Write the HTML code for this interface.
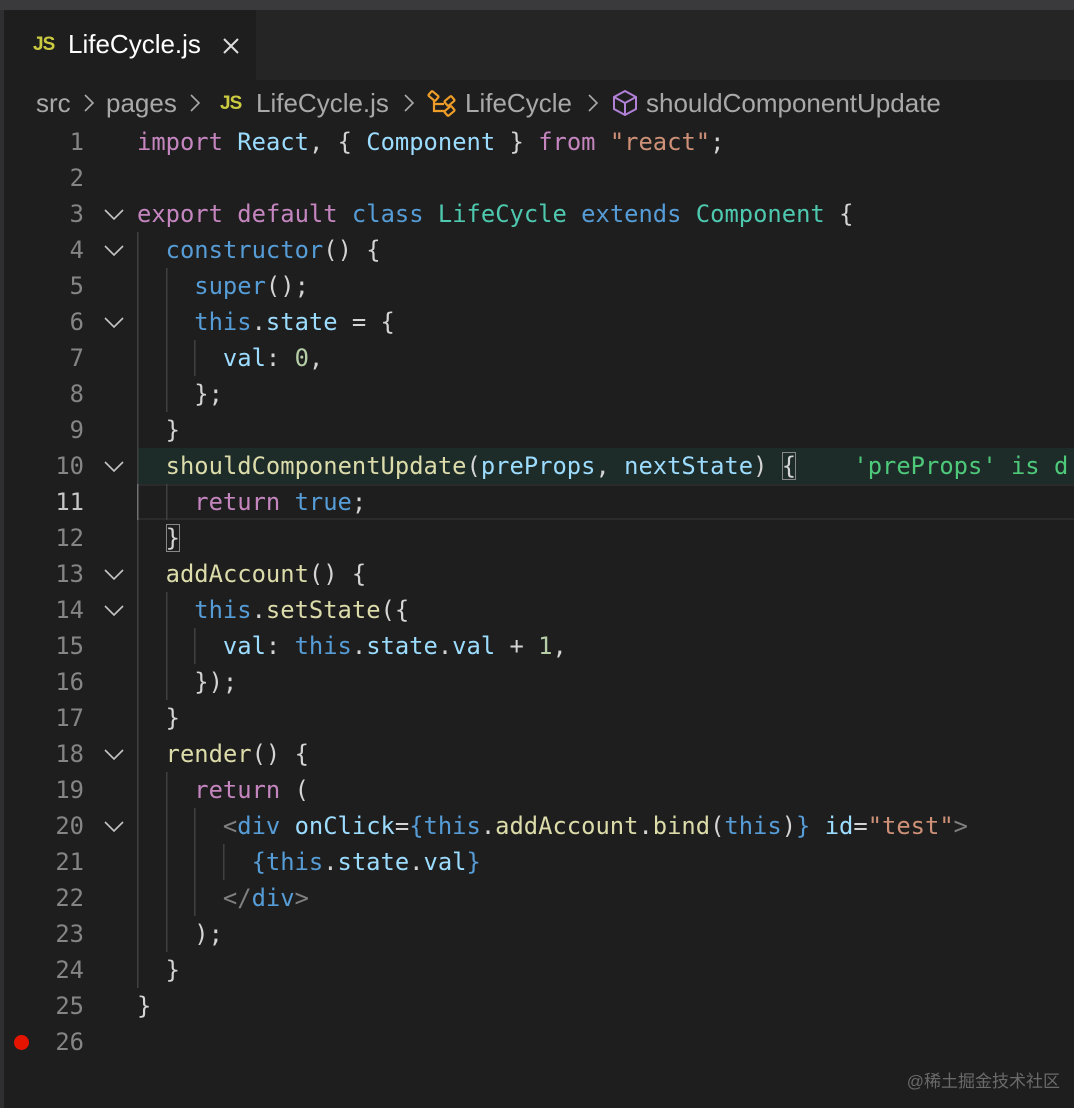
<!DOCTYPE html>
<html><head><meta charset="utf-8"><style>
html,body{margin:0;padding:0;background:#1e1e1e;width:1074px;height:1108px;overflow:hidden;position:relative}
.top{position:absolute;left:0;top:0;width:1074px;height:10px;background:#3a3a3c}
.lb{position:absolute;left:0;top:10px;width:4px;height:1098px;background:#2f2f31}
.tabbar{position:absolute;left:4px;top:10px;width:1070px;height:70px;background:#252526}
.tab{position:absolute;left:4px;top:10px;width:252px;height:70px;background:#1e1e1e;font-family:"Liberation Sans",sans-serif;font-size:26px;color:#fff}
.js{font-family:"Liberation Sans",sans-serif;font-weight:bold;color:#cbcb41;font-size:19px;letter-spacing:-1px}
.bc{position:absolute;left:0;top:86px;width:1074px;height:34px;font-family:"Liberation Sans",sans-serif;font-size:26px;color:#a9a9a9;white-space:nowrap;line-height:34px}
.bc span,.bc svg{position:absolute;top:0}
.bc svg{top:3px}
.code{position:absolute;left:0;top:124px;width:1074px;font-family:"DejaVu Sans Mono","Liberation Mono",monospace;font-size:23.8px}
.ln{position:relative;height:36px;line-height:36px;white-space:pre}
.num{position:absolute;left:0;width:84px;text-align:right;color:#858585}
.fold{position:absolute;left:103px;top:11px}
.txt{position:absolute;left:137px;top:0;color:#d4d4d4}
.g{display:inline-block;width:2ch;height:36px;vertical-align:top;box-shadow:inset 1.5px 0 0 #404040}
.ga{box-shadow:inset 1.5px 0 0 #707070}
.k{color:#c586c0}.b{color:#569cd6}.v{color:#9cdcfe}.t{color:#4ec9b0}.f{color:#dcdcaa}.s{color:#ce9178}.n{color:#b5cea8}.gr{color:#808080}
.hl{position:absolute;left:137px;top:448px;width:937px;height:36px;background:#1d2b29}
.cur{position:absolute;left:137px;top:484px;width:937px;height:32px;border-top:2px solid #2a2a2a;border-bottom:2px solid #2a2a2a}
.box{outline:1.5px solid #888;outline-offset:-1px}
.wm{position:absolute;right:14px;bottom:16px;font-family:"Liberation Sans","Noto Sans CJK SC",sans-serif;font-size:17px;color:#6a6a6a}
.dot{position:absolute;left:14px;top:1035px;width:15px;height:15px;border-radius:50%;background:#e51400}
</style></head><body>
<div class="top"></div><div class="lb"></div>
<div class="tabbar"></div>
<div class="tab"><span class="js" style="position:absolute;left:29px;top:24px">JS</span><span style="position:absolute;left:64px;top:19px">LifeCycle.js</span>
<svg style="position:absolute;left:218px;top:27px" width="18" height="18" viewBox="0 0 18 18"><path d="M2 2L16 16M16 2L2 16" stroke="#ddd" stroke-width="2"/></svg></div>
<div class="bc">
<span style="left:36px">src</span>
<svg style="left:83px" width="12" height="28" viewBox="0 0 12 28"><path d="M2 6L10 14L2 22" fill="none" stroke="#a9a9a9" stroke-width="1.6"/></svg>
<span style="left:106px">pages</span>
<svg style="left:189px" width="12" height="28" viewBox="0 0 12 28"><path d="M2 6L10 14L2 22" fill="none" stroke="#a9a9a9" stroke-width="1.6"/></svg>
<span class="js" style="left:220px;top:1px">JS</span>
<span style="left:256px">LifeCycle.js</span>
<svg style="left:403px" width="12" height="28" viewBox="0 0 12 28"><path d="M2 6L10 14L2 22" fill="none" stroke="#a9a9a9" stroke-width="1.6"/></svg>
<svg style="left:426px" width="32" height="28" viewBox="0 0 32 28"><g fill="none" stroke="#ee9d28" stroke-width="2.2"><rect x="3" y="4" width="9" height="6" rx="1" transform="rotate(40 7.5 7)"/><rect x="19" y="9" width="9" height="6" rx="1" transform="rotate(-40 23.5 12)"/><rect x="19" y="19" width="9" height="6" rx="1" transform="rotate(-40 23.5 22)"/><path d="M8 12V22H18M8 15H18"/></g></svg>
<span style="left:465px">LifeCycle</span>
<svg style="left:587px" width="12" height="28" viewBox="0 0 12 28"><path d="M2 6L10 14L2 22" fill="none" stroke="#a9a9a9" stroke-width="1.6"/></svg>
<svg style="left:611px" width="28" height="28" viewBox="0 0 28 28"><g fill="none" stroke="#b180d7" stroke-width="2"><path d="M14 2L25 8V20L14 26L3 20V8Z"/><path d="M3 8L14 14L25 8M14 14V26"/></g></svg>
<span style="left:646px">shouldComponentUpdate</span>
</div>
<div class="hl"></div><div class="cur"></div>
<div class="code">
<div class="ln"><span class="num">1</span><span class="txt"><span class="k">import</span> <span class="v">React</span>, { <span class="v">Component</span> } <span class="k">from</span> <span class="s">"react"</span>;</span></div>
<div class="ln"><span class="num">2</span></div>
<div class="ln"><span class="num">3</span><svg class="fold" width="22" height="14" viewBox="0 0 22 14"><path d="M2 3L11 12L20 3" fill="none" stroke="#c5c5c5" stroke-width="1.6"/></svg><span class="txt"><span class="k">export</span> <span class="k">default</span> <span class="b">class</span> <span class="t">LifeCycle</span> <span class="b">extends</span> <span class="t">Component</span> {</span></div>
<div class="ln"><span class="num">4</span><svg class="fold" width="22" height="14" viewBox="0 0 22 14"><path d="M2 3L11 12L20 3" fill="none" stroke="#c5c5c5" stroke-width="1.6"/></svg><span class="txt"><span class="g"></span><span class="b">constructor</span>() {</span></div>
<div class="ln"><span class="num">5</span><span class="txt"><span class="g"></span><span class="g"></span><span class="b">super</span>();</span></div>
<div class="ln"><span class="num">6</span><svg class="fold" width="22" height="14" viewBox="0 0 22 14"><path d="M2 3L11 12L20 3" fill="none" stroke="#c5c5c5" stroke-width="1.6"/></svg><span class="txt"><span class="g"></span><span class="g"></span><span class="b">this</span>.<span class="v">state</span> = {</span></div>
<div class="ln"><span class="num">7</span><span class="txt"><span class="g"></span><span class="g"></span><span class="g"></span><span class="v">val</span>: <span class="n">0</span>,</span></div>
<div class="ln"><span class="num">8</span><span class="txt"><span class="g"></span><span class="g"></span>};</span></div>
<div class="ln"><span class="num">9</span><span class="txt"><span class="g"></span>}</span></div>
<div class="ln"><span class="num">10</span><svg class="fold" width="22" height="14" viewBox="0 0 22 14"><path d="M2 3L11 12L20 3" fill="none" stroke="#c5c5c5" stroke-width="1.6"/></svg><span class="txt"><span class="g"></span><span class="f">shouldComponentUpdate</span>(<span class="v">preProps</span>, <span class="v">nextState</span>) <span class="box">{</span>    <span style="color:#4ec97a">'preProps' is d</span></span></div>
<div class="ln"><span class="num" style="color:#c6c6c6">11</span><span class="txt"><span class="g ga"></span><span class="g"></span><span class="k">return</span> <span class="b">true</span>;</span></div>
<div class="ln"><span class="num">12</span><span class="txt"><span class="g"></span><span class="box">}</span></span></div>
<div class="ln"><span class="num">13</span><svg class="fold" width="22" height="14" viewBox="0 0 22 14"><path d="M2 3L11 12L20 3" fill="none" stroke="#c5c5c5" stroke-width="1.6"/></svg><span class="txt"><span class="g"></span><span class="f">addAccount</span>() {</span></div>
<div class="ln"><span class="num">14</span><svg class="fold" width="22" height="14" viewBox="0 0 22 14"><path d="M2 3L11 12L20 3" fill="none" stroke="#c5c5c5" stroke-width="1.6"/></svg><span class="txt"><span class="g"></span><span class="g"></span><span class="b">this</span>.<span class="f">setState</span>({</span></div>
<div class="ln"><span class="num">15</span><span class="txt"><span class="g"></span><span class="g"></span><span class="g"></span><span class="v">val</span>: <span class="b">this</span>.<span class="v">state</span>.<span class="v">val</span> + <span class="n">1</span>,</span></div>
<div class="ln"><span class="num">16</span><span class="txt"><span class="g"></span><span class="g"></span>});</span></div>
<div class="ln"><span class="num">17</span><span class="txt"><span class="g"></span>}</span></div>
<div class="ln"><span class="num">18</span><svg class="fold" width="22" height="14" viewBox="0 0 22 14"><path d="M2 3L11 12L20 3" fill="none" stroke="#c5c5c5" stroke-width="1.6"/></svg><span class="txt"><span class="g"></span><span class="f">render</span>() {</span></div>
<div class="ln"><span class="num">19</span><span class="txt"><span class="g"></span><span class="g"></span><span class="k">return</span> (</span></div>
<div class="ln"><span class="num">20</span><svg class="fold" width="22" height="14" viewBox="0 0 22 14"><path d="M2 3L11 12L20 3" fill="none" stroke="#c5c5c5" stroke-width="1.6"/></svg><span class="txt"><span class="g"></span><span class="g"></span><span class="g"></span><span class="gr">&lt;</span><span class="b">div</span> <span class="v">onClick</span>=<span class="b">{</span><span class="b">this</span>.<span class="f">addAccount</span>.<span class="f">bind</span>(<span class="b">this</span>)<span class="b">}</span> <span class="v">id</span>=<span class="s">"test"</span><span class="gr">&gt;</span></span></div>
<div class="ln"><span class="num">21</span><span class="txt"><span class="g"></span><span class="g"></span><span class="g"></span><span class="g"></span><span class="b">{</span><span class="b">this</span>.<span class="v">state</span>.<span class="v">val</span><span class="b">}</span></span></div>
<div class="ln"><span class="num">22</span><span class="txt"><span class="g"></span><span class="g"></span><span class="g"></span><span class="gr">&lt;/</span><span class="b">div</span><span class="gr">&gt;</span></span></div>
<div class="ln"><span class="num">23</span><span class="txt"><span class="g"></span><span class="g"></span>);</span></div>
<div class="ln"><span class="num">24</span><span class="txt"><span class="g"></span>}</span></div>
<div class="ln"><span class="num">25</span><span class="txt">}</span></div>
<div class="ln"><span class="num">26</span></div>
</div>
<div class="dot"></div>
<div class="wm">@稀土掘金技术社区</div>
</body></html>
